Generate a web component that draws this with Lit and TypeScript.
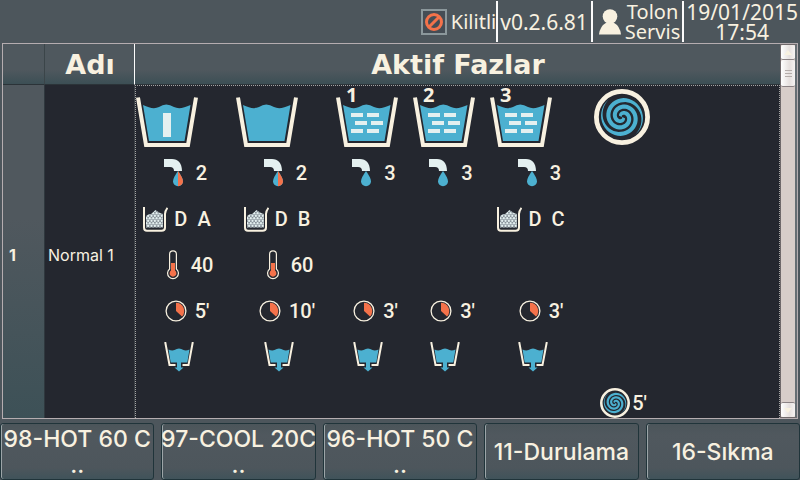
import { LitElement, html, svg, css, nothing } from "lit";
import { customElement, property } from "lit/decorators.js";

type Bath = "prewash" | "plain" | "rinse" | "spin";

interface Phase {
  bath: Bath;
  rinseNo?: string;
  wide?: boolean;
  water?: { level: string; mixed: boolean };
  doses?: string[];
  temperature?: string;
  time?: string;
  drain?: boolean;
  spinTime?: string;
}

const PHASES: Phase[] = [
  { bath: "prewash", wide: true, water: { level: "2", mixed: true }, doses: ["D", "A"], temperature: "40", time: "5'", drain: true },
  { bath: "plain", wide: true, water: { level: "2", mixed: true }, doses: ["D", "B"], temperature: "60", time: "10'", drain: true },
  { bath: "rinse", rinseNo: "1", water: { level: "3", mixed: false }, time: "3'", drain: true },
  { bath: "rinse", rinseNo: "2", water: { level: "3", mixed: false }, time: "3'", drain: true },
  { bath: "rinse", rinseNo: "3", wide: true, water: { level: "3", mixed: false }, doses: ["D", "C"], time: "3'", drain: true },
  { bath: "spin", spinTime: "5'" },
];

const PROGRAMS = [
  ["98-HOT 60 C", ".."],
  ["97-COOL 20C", ".."],
  ["96-HOT 50 C", ".."],
  ["11-Durulama"],
  ["16-Sıkma"],
];

/** Outline of one spiral arm around (0,0), tapered at its outer end. */
function spiralArm(startDegrees: number): string {
  const outer: string[] = [];
  const inner: string[] = [];
  for (let i = 0; i <= 64; i++) {
    const t = (i / 64) * 1.6;
    const a = ((startDegrees - 360 * t) * Math.PI) / 180;
    const r = 22.2 - 13.2 * t;
    const w = 2.1 * Math.min(1, t / 0.4);
    const at = (d: number) => `${(d * Math.cos(a)).toFixed(2)},${(d * Math.sin(a)).toFixed(2)}`;
    outer.push(at(r + w));
    inner.unshift(at(r - w));
  }
  return `M${outer.concat(inner).join("L")}Z`;
}

const ARMS = [spiralArm(58), spiralArm(238)];

const spinIcon = (size: number) => html`
  <svg width=${size} height=${size} viewBox="-28 -28 56 56" aria-hidden="true">
    <circle r="25.6" fill="none" stroke="#f8f1e0" stroke-width="4.8" />
    ${ARMS.map((d) => svg`<path d=${d} fill="#4cb0d0" />`)}
  </svg>`;

const dash = (x: number, y: number) => svg`<rect x=${x} y=${y} width="12" height="4" fill="#e4f0f0" />`;

const tubIcon = (bath: Bath, no?: string) => html`
  <svg class="tub" width="62" height="64" viewBox="0 1 62 64" role="img" aria-label=${bath}>
    <path d="M2 12.5 10 59.9H52L60 12.5" fill="none" stroke="#f8f1e0" stroke-width="4" />
    <path d="M7 20Q17 25 23 22 30 17 38 22 44 25 54.500 20L48.500 56H13Z" fill="#4cb0d0" />
    ${bath === "prewash" ? svg`<rect x="27" y="28" width="8" height="24" fill="#e4f0f0" />` : nothing}
    ${bath === "rinse"
      ? [dash(15, 28), dash(31, 28), dash(19, 36), dash(35, 36), dash(15, 44), dash(31, 44)]
      : nothing}
    ${no ? svg`<text class="tub-no" x="10" y="17">${no}</text>` : nothing}
  </svg>`;

const tapIcon = (mixed: boolean) => html`
  <svg width="19" height="28" viewBox="0 0 19 28" aria-hidden="true">
    <path d="M0 0H8C14 0 18 4 18 12H10Q10 8 6 8H0Z" fill="#e4f0f0" />
    <path d="M14 12Q19 19 19 22.200A5 5 0 0 1 9 22.200Q9 19 14 12Z" fill="#4cb0d0" />
    ${mixed ? svg`<path d="M14 12Q19 19 19 22.200A5 5 0 0 1 14 27.200Z" fill="#f4724a" />` : nothing}
  </svg>`;

const doseIcon = html`
  <svg width="25" height="25" viewBox="0 0 25 25" aria-hidden="true">
    <defs>
      <pattern id="grain" width="3.400" height="5" patternUnits="userSpaceOnUse">
        <rect width="3.400" height="5" fill="#7c868f" />
        <circle cx="0" cy="1.200" r="1.200" fill="#e4f0f0" />
        <circle cx="3.400" cy="1.200" r="1.200" fill="#e4f0f0" />
        <circle cx="1.700" cy="3.700" r="1.200" fill="#e4f0f0" />
      </pattern>
    </defs>
    <path d="M3 9 6 7 8 7 12.500 3 17 6 20 7V20.500H3Z" fill="url(#grain)" />
    <path d="M1 0V20.500Q1 23.800 4 23.800H18.500Q22 23.800 22 20.500V7Q22 4 24.500 .8" fill="none" stroke="#f8f1e0" stroke-width="2" />
  </svg>`;

const thermometerIcon = html`
  <svg width="12" height="30" viewBox="0 0 12 30" aria-hidden="true">
    <path d="M2.600 19V4.200A3.400 3.400 0 0 1 9.400 4.200V19A5.400 5.400 0 1 1 2.600 19Z" fill="none" stroke="#f8f1e0" stroke-width="1.200" />
    <path d="M4 13H8V20.500A3.400 3.400 0 1 1 4 20.500Z" fill="#f4724a" />
  </svg>`;

const clockIcon = html`
  <svg width="22" height="22" viewBox="0 0 22 22" aria-hidden="true">
    <circle cx="11" cy="11" r="9.900" fill="none" stroke="#f8f1e0" stroke-width="1.300" />
    <path d="M11 11V2.800A8.200 8.200 0 0 1 17 16.600Z" fill="#f4724a" />
  </svg>`;

const drainIcon = html`
  <svg width="30" height="30" viewBox="0 0 30 30" role="img" aria-label="drain">
    <path d="M1.200 0 5.500 23H11.500M18.500 23H24.500L28.800 0" fill="none" stroke="#f8f1e0" stroke-width="2" />
    <path d="M4.500 7.500Q8 9 10.500 8 15 5 19.500 8 22 9 25.500 7.500L23.300 20.500H17V25.500H19.500L15 29.500 10.500 25.500H13V20.500H6.700Z" fill="#4cb0d0" />
  </svg>`;

@customElement("phase-column")
export class PhaseColumn extends LitElement {
  @property({ attribute: false }) phase!: Phase;

  static styles = css`
    :host { display: block; }
    .column { width: 63px; }
    .wide { width: 86px; }
    .slot {
      box-sizing: border-box;
      height: 46px;
      display: flex;
      align-items: center;
      justify-content: center;
      font: 500 20px/24px Roboto, "Liberation Sans", sans-serif;
      color: #f8f1e0;
    }
    .slot svg { display: block; flex: none; }
    .bath { height: 64px; justify-content: flex-start; }
    .bath.round { justify-content: center; padding-bottom: 2px; }
    .water { gap: 13px; padding-left: 13px; }
    .dose { gap: 6px; padding-right: 4px; }
    .codes { display: flex; gap: 10px; }
    .heat { gap: 12px; padding-left: 22px; }
    .time { gap: 8px; padding-left: 16px; }
    .spin { height: 38px; align-items: flex-end; gap: 2px; padding-left: 4px; }
    .spin span { line-height: 30px; }
    .tub { overflow: visible; }
    .tub-no { font: 700 20px "Noto Sans", sans-serif; fill: #f8f1e0; }
  `;

  render() {
    const p = this.phase;
    return html`
      <div class="column ${p.wide ? "wide" : ""}">
        <div class="slot bath ${p.bath === "spin" ? "round" : ""}">
          ${p.bath === "spin" ? spinIcon(56) : tubIcon(p.bath, p.rinseNo)}
        </div>
        <div class="slot water">${p.water ? html`${tapIcon(p.water.mixed)}<span>${p.water.level}</span>` : nothing}</div>
        <div class="slot dose">
          ${p.doses ? html`${doseIcon}<span class="codes">${p.doses.map((d) => html`<span>${d}</span>`)}</span>` : nothing}
        </div>
        <div class="slot heat">${p.temperature ? html`${thermometerIcon}<span>${p.temperature}</span>` : nothing}</div>
        <div class="slot time">${p.time ? html`${clockIcon}<span>${p.time}</span>` : nothing}</div>
        <div class="slot">${p.drain ? drainIcon : nothing}</div>
        <div class="slot spin">${p.spinTime ? html`${spinIcon(30)}<span>${p.spinTime}</span>` : nothing}</div>
      </div>`;
  }
}

@customElement("app-root")
export class AppRoot extends LitElement {
  static styles = css`
    :host {
      display: flex;
      flex-direction: column;
      min-height: 100vh;
      overflow: hidden;
      background: #4d565c;
      color: #f8f1e0;
    }
    .status {
      display: flex;
      justify-content: flex-end;
      height: 43px;
      font: 21px/20px "Noto Sans", "DejaVu Sans", sans-serif;
    }
    .item {
      display: flex;
      align-items: center;
      gap: 4px;
      margin: 1px 0;
      padding: 0 3px 0 2px;
      border-left: 2px solid #fbfbfb;
      text-align: center;
    }
    .item svg { display: block; }
    .lock { border-left: 0; padding-right: 0; }
    .name { font-size: 20px; }
    .user { padding: 0 2px 0 6px; }
    .date { padding: 0 2px; }
    .frame {
      flex: 1;
      display: flex;
      margin: 0 2px;
      border: 1px solid #b5adb0;
      background: #24272f;
    }
    .grid {
      flex: 1;
      border-spacing: 0;
      table-layout: fixed;
      width: 100%;
    }
    .grid th, .grid td { padding: 0; }
    .c-no { width: 42px; }
    .c-name { width: 90px; }
    .head th {
      height: 41px;
      box-sizing: border-box;
      background: linear-gradient(#4f585e 65%, #3c4f55);
      border-bottom: 1px solid #2b3338;
      font: 700 27px/32px "DejaVu Sans", sans-serif;
    }
    .grid .head th { padding: 2px 0 0 1px; }
    .head .edge {
      border-right: 1px solid #fbfbfb;
    }
    .head .first { border-right: 1px solid #3b4549; }
    .index {
      background: linear-gradient(#50585e 40%, #3d5157);
      border-right: 1px solid #2f383e;
      font: 700 16px/20px Inter, "DejaVu Sans", sans-serif;
      text-align: left;
    }
    .grid .index { padding: 6px 0 0 6px; }
    .title {
      font: 16px/20px Inter, "DejaVu Sans", sans-serif;
      border-right: 1px solid #3b4045;
    }
    .grid .title { padding: 6px 0 0 3px; }
    .cell {
      border: 1px dotted #a5a5a5;
      border-bottom: 0;
      vertical-align: top;
    }
    .phases { display: flex; gap: 14px; }
    .scroll {
      width: 17px;
      box-sizing: border-box;
      display: flex;
      flex-direction: column;
      border: 1px solid #70696b;
      border-right: 2px solid #666e73;
      background: #d8cdc9;
    }
    .arrow, .thumb {
      box-sizing: border-box;
      width: 100%;
      height: 15px;
      padding: 0;
      border: 0;
      border-bottom: 1px solid #8b8284;
      border-radius: 2px;
      background: linear-gradient(90deg, #fff, #e6e0de 60%, #f6f3f2);
    }
    .arrow svg { display: block; margin: 0 auto; }
    .thumb {
      height: 27px;
      display: flex;
      flex-direction: column;
      justify-content: center;
      align-items: center;
      gap: 2px;
    }
    .grip { width: 7px; height: 1px; background: #b5adaa; }
    .track { flex: 1; }
    .down { border-top: 1px solid #8b8284; border-bottom: 0; }
    .programs {
      display: grid;
      grid-template-columns: repeat(5, minmax(0, 1fr));
      gap: 7px;
      padding-top: 4px;
    }
    .program {
      height: 57px;
      padding: 0;
      overflow: hidden;
      border: 1px solid #20343a;
      border-radius: 3px;
      box-shadow: inset 1px 0 #9ca5a8;
      background: linear-gradient(#4b555a, #50585e 20%, #4d565c 80%, #40535a);
      color: #f8f1e0;
      font: 500 23px/26px Inter, "DejaVu Sans", sans-serif;
      white-space: nowrap;
    }
    .line { display: flex; justify-content: center; }
  `;

  render() {
    return html`
      <header class="status">
        <div class="item lock">
          <svg width="26" height="26" viewBox="0 0 26 26" aria-hidden="true">
            <rect x="1" y="1" width="24" height="24" fill="#454d55" stroke="#8b979b" stroke-width="2" />
            <circle cx="13" cy="13" r="7.500" fill="none" stroke="#f4724a" stroke-width="3" />
            <path d="M8 18 18 8" stroke="#f4724a" stroke-width="3" />
          </svg>
          <span class="name">Kilitli</span>
        </div>
        <div class="item">v0.2.6.81</div>
        <div class="item user">
          <svg width="22" height="26" viewBox="0 0 22 26" aria-hidden="true">
            <circle cx="11" cy="7.500" r="7.300" fill="#f8f1e0" />
            <path d="M0 25.500Q1 17 7.500 13.500H14.500Q21 17 22 25.500Z" fill="#f8f1e0" />
          </svg>
          <span class="name">Tolon<br />Servis</span>
        </div>
        <div class="item date"><time datetime="2015-01-19T17:54">19/01/2015<br />17:54</time></div>
      </header>

      <main class="frame">
        <table class="grid">
          <colgroup><col class="c-no" /><col class="c-name" /><col /></colgroup>
          <thead>
            <tr class="head"><th class="first"></th><th class="edge" scope="col">Adı</th><th scope="col">Aktif Fazlar</th></tr>
          </thead>
          <tbody>
            <tr>
              <th class="index" scope="row">1</th>
              <td class="title">Normal 1</td>
              <td class="cell">
                <div class="phases">
                  ${PHASES.map((p) => html`<phase-column .phase=${p}></phase-column>`)}
                </div>
              </td>
            </tr>
          </tbody>
        </table>
        <div class="scroll">
          <button class="arrow" aria-label="Up">
            <svg width="8" height="5" viewBox="0 0 8 5"><path d="M4 0 8 5H0Z" fill="#f8f1e0" /></svg>
          </button>
          <div class="thumb"><i class="grip"></i><i class="grip"></i><i class="grip"></i></div>
          <div class="track"></div>
          <button class="arrow down" aria-label="Down">
            <svg width="8" height="5" viewBox="0 0 8 5"><path d="M0 0H8L4 5Z" fill="#f8f1e0" /></svg>
          </button>
        </div>
      </main>

      <nav class="programs">
        ${PROGRAMS.map((lines) => html`
          <button class="program">${lines.map((l) => html`<span class="line">${l}</span>`)}</button>`)}
      </nav>`;
  }
}
